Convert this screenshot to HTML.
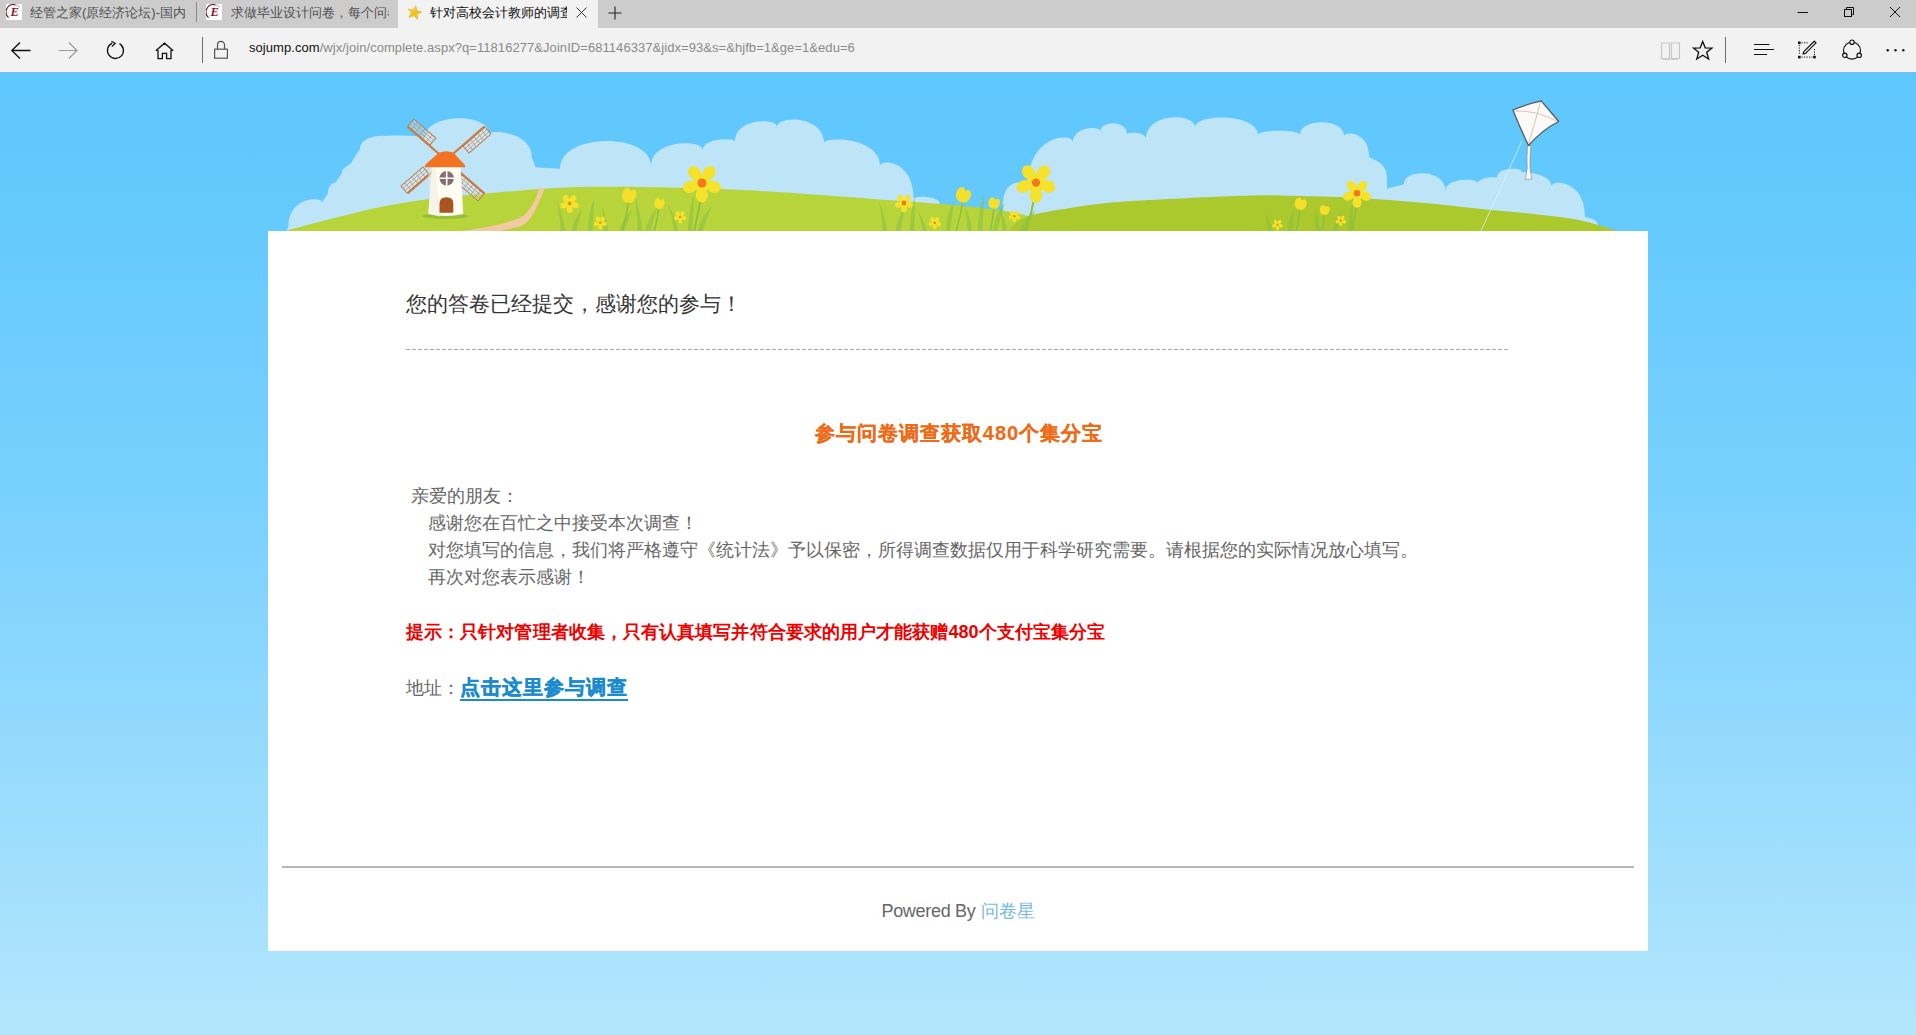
<!DOCTYPE html>
<html><head><meta charset="utf-8">
<style>
*{margin:0;padding:0;box-sizing:border-box}
html,body{width:1916px;height:1035px;overflow:hidden;font-family:"Liberation Sans",sans-serif}
body{position:relative;background:#fff}
.abs{position:absolute}
#tabs{position:absolute;left:0;top:0;width:1916px;height:28px;background:#cccccc}
#addr{position:absolute;left:0;top:28px;width:1916px;height:44px;background:#f2f2f2}
#page{position:absolute;left:0;top:72px;width:1916px;height:963px;background:linear-gradient(to bottom,#5ec7fd 0%,#63c9fd 12%,#77d0fd 42%,#95dafd 71%,#b3e6fc 100%)}
.tabt{position:absolute;top:5px;font-size:13px;line-height:16px;white-space:nowrap;overflow:hidden;color:#505050}
.sep{position:absolute;width:1px;background:#7a7a7a}
</style></head>
<body>
<div id="tabs">
  <!-- tab1 -->
  <svg class="abs" style="left:6px;top:4px" width="16" height="16" viewBox="0 0 16 16">
    <rect x="0" y="0" width="16" height="16" fill="#fdfdfd"/>
    <path d="M9.5 0.9 A7.4 7.4 0 0 0 2.6 13.6" fill="none" stroke="#6a1a2c" stroke-width="1.2"/>
    <path d="M9.5 0.9 A7.4 7.4 0 0 1 14 3.2" fill="none" stroke="#b88090" stroke-width="0.8"/>
    <text x="4.6" y="12.4" font-family="Liberation Serif" font-style="italic" font-weight="bold" font-size="12.5" fill="#8a1628">E</text>
  </svg>
  <div class="tabt" style="left:30px;width:157px">经管之家(原经济论坛)-国内</div>
  <div class="sep" style="left:196px;top:2px;height:20px;background:#8a8a8a"></div>
  <!-- tab2 -->
  <svg class="abs" style="left:206px;top:4px" width="16" height="16" viewBox="0 0 16 16">
    <rect x="0" y="0" width="16" height="16" fill="#fdfdfd"/>
    <path d="M9.5 0.9 A7.4 7.4 0 0 0 2.6 13.6" fill="none" stroke="#6a1a2c" stroke-width="1.2"/>
    <path d="M9.5 0.9 A7.4 7.4 0 0 1 14 3.2" fill="none" stroke="#b88090" stroke-width="0.8"/>
    <text x="4.6" y="12.4" font-family="Liberation Serif" font-style="italic" font-weight="bold" font-size="12.5" fill="#8a1628">E</text>
  </svg>
  <div class="tabt" style="left:231px;width:158px">求做毕业设计问卷，每个问卷</div>
  <!-- active tab -->
  <div class="abs" style="left:398px;top:0;width:200px;height:28px;background:#f2f2f2"></div>
  <svg class="abs" style="left:406px;top:4px" width="17" height="17" viewBox="0 0 17 17">
    <defs><linearGradient id="sg" x1="0" y1="0" x2="1" y2="1"><stop offset="0" stop-color="#fde9a0"/><stop offset="0.5" stop-color="#f6bf1c"/><stop offset="1" stop-color="#f2d21a"/></linearGradient></defs>
    <path transform="rotate(12 8.5 8.5)" d="M8.5 1.6 L10.4 6.2 L15.4 6.5 L11.5 9.6 L12.9 14.6 L8.5 11.8 L4.1 14.6 L5.5 9.6 L1.6 6.5 L6.6 6.2 Z" fill="url(#sg)" stroke="#e3a514" stroke-width="0.5"/>
  </svg>
  <div class="tabt" style="left:430px;width:137px;color:#111">针对高校会计教师的调查</div>
  <svg class="abs" style="left:576px;top:7px" width="11" height="11" viewBox="0 0 11 11">
    <path d="M0.5 0.5 L10.5 10.5 M10.5 0.5 L0.5 10.5" stroke="#333" stroke-width="1"/>
  </svg>
  <svg class="abs" style="left:608px;top:6px" width="14" height="14" viewBox="0 0 14 14">
    <path d="M7 0.5 V13.5 M0.5 7 H13.5" stroke="#222" stroke-width="1.1"/>
  </svg>
  <!-- window controls -->
  <svg class="abs" style="left:1797px;top:11px" width="12" height="3" viewBox="0 0 12 3"><path d="M0.5 1.5 H11" stroke="#111" stroke-width="1"/></svg>
  <svg class="abs" style="left:1843px;top:6px" width="12" height="12" viewBox="0 0 12 12">
    <rect x="1.5" y="3.5" width="7" height="7" fill="none" stroke="#111" stroke-width="1"/>
    <path d="M3.5 3.5 V1.5 H10.5 V8.5 H8.5" fill="none" stroke="#111" stroke-width="1"/>
  </svg>
  <svg class="abs" style="left:1889px;top:6px" width="12" height="12" viewBox="0 0 12 12"><path d="M1 1 L11 11 M11 1 L1 11" stroke="#111" stroke-width="1"/></svg>
</div>
<div id="addr">
  <!-- back -->
  <svg class="abs" style="left:10px;top:13px" width="22" height="20" viewBox="0 0 22 20">
    <path d="M1.8 9.5 H20.5 M10 1.5 L1.8 9.5 L10 17.5" fill="none" stroke="#111" stroke-width="1.3"/>
  </svg>
  <!-- forward -->
  <svg class="abs" style="left:57px;top:13px" width="22" height="20" viewBox="0 0 22 20">
    <path d="M1.5 9.5 H20 M11.8 1.5 L20 9.5 L11.8 17.5" fill="none" stroke="#9a9a9a" stroke-width="1.2"/>
  </svg>
  <!-- refresh -->
  <svg class="abs" style="left:105px;top:12px" width="22" height="22" viewBox="0 0 22 22">
    <path d="M7.2 3.2 A8 8 0 1 0 14.5 3.6" fill="none" stroke="#111" stroke-width="1.3"/>
    <path d="M6.4 1.2 L10.2 3.3 L6.8 6.6" fill="none" stroke="#111" stroke-width="1.3"/>
  </svg>
  <!-- home -->
  <svg class="abs" style="left:153px;top:13px" width="22" height="20" viewBox="0 0 22 20">
    <path d="M2.8 9.8 L11.5 2.2 L20.2 9.8 M5 7.8 V17.6 H9.4 V12.4 H13.6 V17.6 H18 V7.8" fill="none" stroke="#111" stroke-width="1.3"/>
  </svg>
  <div class="sep" style="left:202px;top:9px;height:26px;background:#6a6a6a"></div>
  <!-- lock -->
  <svg class="abs" style="left:212px;top:12px" width="18" height="20" viewBox="0 0 18 20">
    <path d="M5.5 9 V4.8 A3.5 3.5 0 0 1 12.5 4.8 V9" fill="none" stroke="#555" stroke-width="1.2"/>
    <rect x="2.6" y="9.2" width="12.8" height="9" fill="none" stroke="#555" stroke-width="1.2"/>
  </svg>
  <div class="abs" id="url" style="left:249px;top:12px;letter-spacing:0.06px;font-size:13px;line-height:16px;white-space:nowrap;color:#8a8a8a"><span style="color:#111">sojump.com</span>/wjx/join/complete.aspx?q=11816277&amp;JoinID=681146337&amp;jidx=93&amp;s=&amp;hjfb=1&amp;ge=1&amp;edu=6</div>
  <!-- reading view -->
  <svg class="abs" style="left:1660px;top:13px" width="22" height="20" viewBox="0 0 22 20">
    <path d="M1.5 2 H9.5 V17.5 H1.5 Z M11.5 2 H19.5 V17.5 H11.5 Z" fill="none" stroke="#c6c6c6" stroke-width="1.2"/>
    <path d="M3 18.5 H18" stroke="#d0d0d0" stroke-width="1"/>
  </svg>
  <!-- star -->
  <svg class="abs" style="left:1692px;top:12px" width="22" height="21" viewBox="0 0 22 21">
    <path d="M10.7 1.5 L13.2 7.8 L20 8.1 L14.7 12.3 L16.6 19 L10.7 15.2 L4.8 19 L6.7 12.3 L1.4 8.1 L8.2 7.8 Z" fill="none" stroke="#111" stroke-width="1.3" stroke-linejoin="miter"/>
  </svg>
  <div class="sep" style="left:1725px;top:9px;height:26px;background:#6a6a6a"></div>
  <!-- hub -->
  <svg class="abs" style="left:1753px;top:15px" width="22" height="13" viewBox="0 0 22 13">
    <path d="M1 1.5 H16.5 M1 6.5 H21 M1 11.5 H14" stroke="#111" stroke-width="1.1"/>
  </svg>
  <!-- web note -->
  <svg class="abs" style="left:1797px;top:12px" width="22" height="20" viewBox="0 0 22 20">
    <rect x="1" y="1.5" width="2.6" height="2.6" fill="#111"/>
    <rect x="16.2" y="15.8" width="2.6" height="2.6" fill="#111"/>
    <rect x="1" y="15.8" width="2.6" height="2.6" fill="#111"/>
    <path d="M4.5 2.8 H11 M2.3 5 V15 M4.5 17.1 H15.5 M17.5 9 V15" stroke="#111" stroke-width="1" stroke-dasharray="1.2 1.3"/>
    <path d="M6 14 L8.5 13.4 L19 2.8 L17.3 1.2 L6.8 11.6 Z" fill="none" stroke="#111" stroke-width="1.2" stroke-linejoin="round"/>
  </svg>
  <!-- share -->
  <svg class="abs" style="left:1841px;top:12px;overflow:visible" width="22" height="22" viewBox="0 0 22 22">
    <circle cx="11" cy="10.6" r="8.5" fill="none" stroke="#111" stroke-width="1.2"/>
    <circle cx="11" cy="2.2" r="2.2" fill="#f2f2f2" stroke="#111" stroke-width="1.2"/>
    <circle cx="3.8" cy="15.3" r="2.2" fill="#f2f2f2" stroke="#111" stroke-width="1.2"/>
    <circle cx="18.2" cy="15.3" r="2.2" fill="#f2f2f2" stroke="#111" stroke-width="1.2"/>
  </svg>
  <!-- more -->
  <svg class="abs" style="left:1886px;top:20px" width="20" height="5" viewBox="0 0 20 5">
    <circle cx="1.7" cy="2.2" r="1.2" fill="#111"/><circle cx="9.5" cy="2.2" r="1.2" fill="#111"/><circle cx="17.3" cy="2.2" r="1.2" fill="#111"/>
  </svg>
</div>
<div id="page">
  <div class="abs" style="left:0;top:0;width:1916px;height:1px;background:#7fbcdc"></div>
</div>
<svg class="abs" style="left:0;top:72px" width="1916" height="160" viewBox="0 72 1916 160"><path d="M286,232 L288.5,226 C288.5,196.4 322.0,196.4 322.0,202.3 L328,193.5 C328.0,182.8 336.0,182.8 336.0,182.0 L342,173 C342.0,165.7 352.0,165.7 352.0,161.0 L360,149 C360.0,135.2 385.0,135.2 385.0,136.0 C385.0,135.0 425.0,135.0 425.0,138.0 C425.0,112.5 489.0,112.5 489.0,133.6 C489.0,130.1 532.0,130.1 532.0,158.0 L535.7,167.2 L560,168.7 C560.0,132.2 651.0,132.2 651.0,166.0 C651.0,139.3 703.0,139.3 703.0,150.0 C703.0,137.7 735.0,137.7 735.0,141.5 C735.0,117.9 777.0,117.9 777.0,127.0 C777.0,115.0 824.0,115.0 824.0,143.0 C824.0,136.5 880.0,136.5 880.0,166.0 C880.0,159.2 913.6,159.2 913.6,199.0 C913.6,195.5 940.0,195.5 940.0,204.0 L940,232 Z" fill="#bee4f8"/><path d="M1002.8,232 L1002.8,205 C1002.8,178.2 1027.0,178.2 1027.0,190.0 C1027.0,132.6 1073.0,132.6 1073.0,142.4 C1073.0,125.7 1100.7,125.7 1100.7,131.4 C1100.7,120.2 1127.0,120.2 1127.0,134.3 C1127.0,131.7 1146.0,131.7 1146.0,138.7 C1146.0,112.3 1195.0,112.3 1195.0,127.3 C1195.0,113.0 1258.0,113.0 1258.0,135.0 C1258.0,129.3 1300.0,129.3 1300.0,135.0 C1300.0,118.0 1344.0,118.0 1344.0,136.0 C1344.0,131.3 1369.0,131.3 1369.0,156.0 C1369.0,159.8 1387.0,159.8 1387.0,178.0 L1387,190 C1387.0,186.3 1404.0,186.3 1404.0,183.5 C1404.0,168.7 1445.5,168.7 1445.5,190.8 C1445.5,177.6 1478.0,177.6 1478.0,183.5 C1478.0,176.7 1497.0,176.7 1497.0,177.7 C1497.0,167.0 1522.0,167.0 1522.0,172.0 C1522.0,172.3 1551.4,172.3 1551.4,186.4 C1551.4,179.4 1585.0,179.4 1585.0,217.0 C1585.0,217.6 1598.0,217.6 1598.0,226.0 L1618,232 Z" fill="#bee4f8"/><path d="M286,232 C286.5,231.7 280.1,232.5 288.8,230.0 C297.6,227.5 323.0,220.9 338.5,217.0 C354.0,213.1 367.4,209.6 382.0,206.7 C396.6,203.8 408.9,201.6 426.0,199.4 C443.1,197.2 462.3,195.4 484.6,193.5 C506.9,191.6 537.4,188.8 560.0,187.7 C582.6,186.6 593.3,186.6 620.0,186.8 C646.7,187.0 690.0,187.9 720.0,189.0 C750.0,190.1 773.3,191.8 800.0,193.5 C826.7,195.2 856.9,197.7 880.0,199.4 C903.1,201.1 921.5,202.4 938.5,203.8 C955.5,205.2 967.4,206.1 982.0,208.0 C996.6,209.9 1012.7,211.4 1026.0,215.4 C1039.3,219.4 1056.0,229.2 1062.0,232.0 Z" fill="#b7d43a"/><path d="M1008,232 C1011.0,229.5 1015.7,221.0 1026.0,217.0 C1036.3,213.0 1055.4,210.4 1070.0,208.0 C1084.6,205.6 1098.8,203.7 1113.8,202.3 C1128.8,200.9 1137.3,200.5 1160.0,199.4 C1182.7,198.3 1226.7,196.1 1250.0,195.5 C1273.3,194.9 1281.7,195.6 1300.0,196.0 C1318.3,196.4 1340.2,196.9 1360.0,198.0 C1379.8,199.1 1399.0,200.8 1418.5,202.5 C1438.0,204.2 1457.6,206.5 1477.0,208.4 C1496.4,210.3 1518.0,212.3 1535.0,214.2 C1552.0,216.1 1565.5,217.3 1579.0,220.0 C1592.5,222.7 1608.5,228.3 1615.7,230.3 C1622.9,232.3 1621.0,231.7 1622.0,232.0 Z" fill="#abc82d"/><path d="M539,188 C538.2,190.3 537.0,197.2 534.0,202.0 C531.0,206.8 528.0,213.0 521.0,217.0 C514.0,221.0 501.8,223.7 492.0,226.0 C482.2,228.3 469.3,229.8 462.0,231.0 C454.7,232.2 450.3,232.7 448.0,233.0 L492,233 492,233 C493.2,232.7 494.2,232.2 499.0,231.0 C503.8,229.8 515.7,228.3 521.0,226.0 C526.3,223.7 528.0,221.0 531.0,217.0 C534.0,213.0 536.7,206.8 539.0,202.0 C541.3,197.2 544.0,190.3 545.0,188.0 Z" fill="#f3c9a2"/><path d="M560.8,232 Q559.9,215.5 557.0,202.0 Q563.5,217.0 565.2,232 Z" fill="#86c043" fill-opacity="0.55"/><path d="M571.8,232 Q573.0,219.9 582.0,210.0 Q578.6,221.0 576.2,232 Z" fill="#86c043" fill-opacity="0.55"/><path d="M587.8,232 Q588.4,213.3 594.0,198.0 Q593.5,215.0 592.2,232 Z" fill="#86c043" fill-opacity="0.55"/><path d="M603.8,232 Q603.1,217.7 602.0,206.0 Q607.0,219.0 608.2,232 Z" fill="#86c043" fill-opacity="0.55"/><path d="M619.8,232 Q621.2,219.9 632.0,210.0 Q627.2,221.0 624.2,232 Z" fill="#86c043" fill-opacity="0.55"/><path d="M637.8,232 Q637.0,212.2 635.0,196.0 Q640.8,214.0 642.2,232 Z" fill="#86c043" fill-opacity="0.55"/><path d="M645.8,232 Q647.1,218.8 657.0,208.0 Q653.0,220.0 650.2,232 Z" fill="#86c043" fill-opacity="0.55"/><path d="M673.8,232 Q672.5,216.6 668.0,204.0 Q675.9,218.0 678.2,232 Z" fill="#86c043" fill-opacity="0.55"/><path d="M687.8,232 Q688.4,211.1 694.0,194.0 Q693.5,213.0 692.2,232 Z" fill="#86c043" fill-opacity="0.55"/><path d="M697.8,232 Q699.5,217.7 712.0,206.0 Q705.9,219.0 702.2,232 Z" fill="#86c043" fill-opacity="0.55"/><path d="M882.8,232 Q881.9,215.5 879.0,202.0 Q885.5,217.0 887.2,232 Z" fill="#86c043" fill-opacity="0.55"/><path d="M895.8,232 Q896.8,218.8 905.0,208.0 Q902.4,220.0 900.2,232 Z" fill="#86c043" fill-opacity="0.55"/><path d="M909.8,232 Q910.2,212.2 915.0,196.0 Q915.1,214.0 914.2,232 Z" fill="#86c043" fill-opacity="0.55"/><path d="M922.8,232 Q921.5,219.9 917.0,210.0 Q924.9,221.0 927.2,232 Z" fill="#86c043" fill-opacity="0.55"/><path d="M945.8,232 Q946.6,214.4 954.0,200.0 Q952.0,216.0 950.2,232 Z" fill="#86c043" fill-opacity="0.55"/><path d="M967.8,232 Q967.0,217.7 965.0,206.0 Q970.8,219.0 972.2,232 Z" fill="#86c043" fill-opacity="0.55"/><path d="M977.8,232 Q978.4,210.0 984.0,192.0 Q983.5,212.0 982.2,232 Z" fill="#86c043" fill-opacity="0.55"/><path d="M992.8,232 Q994.2,215.5 1005.0,202.0 Q1000.2,217.0 997.2,232 Z" fill="#86c043" fill-opacity="0.55"/><path d="M1002.8,232 Q1001.9,217.7 999.0,206.0 Q1005.5,219.0 1007.2,232 Z" fill="#86c043" fill-opacity="0.55"/><path d="M1019.8,232 Q1021.9,219.9 1036.0,210.0 Q1028.5,221.0 1024.2,232 Z" fill="#86c043" fill-opacity="0.55"/><path d="M1267.8,232 Q1267.0,221.0 1265.0,212.0 Q1270.8,222.0 1272.2,232 Z" fill="#86c043" fill-opacity="0.55"/><path d="M1287.8,232 Q1288.3,218.8 1294.0,208.0 Q1293.5,220.0 1292.2,232 Z" fill="#86c043" fill-opacity="0.55"/><path d="M1315.8,232 Q1315.3,217.7 1315.0,206.0 Q1319.3,219.0 1320.2,232 Z" fill="#86c043" fill-opacity="0.55"/><path d="M1332.8,232 Q1333.7,219.9 1341.0,210.0 Q1339.0,221.0 1337.2,232 Z" fill="#86c043" fill-opacity="0.55"/><path d="M1347.8,232 Q1348.2,215.5 1353.0,202.0 Q1353.2,217.0 1352.2,232 Z" fill="#86c043" fill-opacity="0.55"/><path d="M702,190 Q699.0,211.0 694,232" stroke="#8cc33c" stroke-width="2" fill="none"/><path d="M1036,190 Q1032.0,211.0 1026,232" stroke="#8cc33c" stroke-width="2" fill="none"/><path d="M1357,199 Q1355.5,215.5 1352,232" stroke="#8cc33c" stroke-width="1.8" fill="none"/><path d="M629,200 Q626.5,216.0 622,232" stroke="#8cc33c" stroke-width="1.6" fill="none"/><path d="M659,207 Q657.5,219.5 654,232" stroke="#8cc33c" stroke-width="1.6" fill="none"/><path d="M963,200 Q960.5,216.0 956,232" stroke="#8cc33c" stroke-width="1.6" fill="none"/><path d="M994,207 Q993.0,219.5 990,232" stroke="#8cc33c" stroke-width="1.6" fill="none"/><path d="M1300,208 Q1299.0,220.0 1296,232" stroke="#8cc33c" stroke-width="1.6" fill="none"/><path d="M1324,213 Q1324.0,222.5 1322,232" stroke="#8cc33c" stroke-width="1.6" fill="none"/><g transform="translate(446,160) rotate(-139)"><line x1="0" y1="0" x2="51" y2="0" stroke="#d07a3a" stroke-width="2.2"/><rect x="22" y="0.8" width="29" height="9" fill="#f2f2ee" fill-opacity="0.35" stroke="#b77d55" stroke-width="1"/><line x1="26.8" y1="0.8" x2="26.8" y2="9.8" stroke="#b98a66" stroke-width="0.7"/><line x1="31.7" y1="0.8" x2="31.7" y2="9.8" stroke="#b98a66" stroke-width="0.7"/><line x1="36.5" y1="0.8" x2="36.5" y2="9.8" stroke="#b98a66" stroke-width="0.7"/><line x1="41.3" y1="0.8" x2="41.3" y2="9.8" stroke="#b98a66" stroke-width="0.7"/><line x1="46.2" y1="0.8" x2="46.2" y2="9.8" stroke="#b98a66" stroke-width="0.7"/><line x1="22" y1="3.8" x2="51" y2="3.8" stroke="#b98a66" stroke-width="0.7"/><line x1="22" y1="6.8" x2="51" y2="6.8" stroke="#b98a66" stroke-width="0.7"/></g><g transform="translate(446,160) rotate(-41)"><line x1="0" y1="0" x2="51" y2="0" stroke="#d07a3a" stroke-width="2.2"/><rect x="22" y="0.8" width="29" height="9" fill="#f2f2ee" fill-opacity="0.35" stroke="#b77d55" stroke-width="1"/><line x1="26.8" y1="0.8" x2="26.8" y2="9.8" stroke="#b98a66" stroke-width="0.7"/><line x1="31.7" y1="0.8" x2="31.7" y2="9.8" stroke="#b98a66" stroke-width="0.7"/><line x1="36.5" y1="0.8" x2="36.5" y2="9.8" stroke="#b98a66" stroke-width="0.7"/><line x1="41.3" y1="0.8" x2="41.3" y2="9.8" stroke="#b98a66" stroke-width="0.7"/><line x1="46.2" y1="0.8" x2="46.2" y2="9.8" stroke="#b98a66" stroke-width="0.7"/><line x1="22" y1="3.8" x2="51" y2="3.8" stroke="#b98a66" stroke-width="0.7"/><line x1="22" y1="6.8" x2="51" y2="6.8" stroke="#b98a66" stroke-width="0.7"/></g><g transform="translate(446,160) rotate(41)"><line x1="0" y1="0" x2="51" y2="0" stroke="#d07a3a" stroke-width="2.2"/><rect x="22" y="0.8" width="29" height="9" fill="#f2f2ee" fill-opacity="0.35" stroke="#b77d55" stroke-width="1"/><line x1="26.8" y1="0.8" x2="26.8" y2="9.8" stroke="#b98a66" stroke-width="0.7"/><line x1="31.7" y1="0.8" x2="31.7" y2="9.8" stroke="#b98a66" stroke-width="0.7"/><line x1="36.5" y1="0.8" x2="36.5" y2="9.8" stroke="#b98a66" stroke-width="0.7"/><line x1="41.3" y1="0.8" x2="41.3" y2="9.8" stroke="#b98a66" stroke-width="0.7"/><line x1="46.2" y1="0.8" x2="46.2" y2="9.8" stroke="#b98a66" stroke-width="0.7"/><line x1="22" y1="3.8" x2="51" y2="3.8" stroke="#b98a66" stroke-width="0.7"/><line x1="22" y1="6.8" x2="51" y2="6.8" stroke="#b98a66" stroke-width="0.7"/></g><g transform="translate(446,160) rotate(139)"><line x1="0" y1="0" x2="51" y2="0" stroke="#d07a3a" stroke-width="2.2"/><rect x="22" y="0.8" width="29" height="9" fill="#f2f2ee" fill-opacity="0.35" stroke="#b77d55" stroke-width="1"/><line x1="26.8" y1="0.8" x2="26.8" y2="9.8" stroke="#b98a66" stroke-width="0.7"/><line x1="31.7" y1="0.8" x2="31.7" y2="9.8" stroke="#b98a66" stroke-width="0.7"/><line x1="36.5" y1="0.8" x2="36.5" y2="9.8" stroke="#b98a66" stroke-width="0.7"/><line x1="41.3" y1="0.8" x2="41.3" y2="9.8" stroke="#b98a66" stroke-width="0.7"/><line x1="46.2" y1="0.8" x2="46.2" y2="9.8" stroke="#b98a66" stroke-width="0.7"/><line x1="22" y1="3.8" x2="51" y2="3.8" stroke="#b98a66" stroke-width="0.7"/><line x1="22" y1="6.8" x2="51" y2="6.8" stroke="#b98a66" stroke-width="0.7"/></g><ellipse cx="445.5" cy="216" rx="23" ry="3" fill="#8fb83a" opacity="0.8"/><path d="M432 166.5 L460.5 166.5 L463.3 214 Q446 218 428.3 214 Z" fill="#fffdf4"/><path d="M428.5 172 L430.5 214 Q437 216.5 440 216.5 L436 166.5 L432 166.5 Z" fill="#f1ece0" opacity="0.6"/><path d="M424.5 167.2 L465.5 167.2 Q465.5 165 463 163 L453.5 152.8 Q446 149.8 438.8 152.8 L427 163 Q424.5 165 424.5 167.2 Z" fill="#f27321"/><circle cx="446.7" cy="178.3" r="7.2" fill="#8a6b6e"/><path d="M446.7 171 V185.6 M439.4 178.3 H454" stroke="#fff" stroke-width="1.6"/><path d="M439.5 212.8 V203.5 Q439.5 197.2 446.5 197.2 Q453.3 197.2 453.3 203.5 V212.8 Z" fill="#a8561f"/><g fill="#f4e22c"><ellipse cx="566.0" cy="198.5" rx="3.5" ry="3.0" transform="rotate(-126 566.0 198.5)"/><ellipse cx="573.2" cy="198.5" rx="3.5" ry="3.0" transform="rotate(-54 573.2 198.5)"/><ellipse cx="575.4" cy="205.4" rx="3.5" ry="3.0" transform="rotate(18 575.4 205.4)"/><ellipse cx="569.6" cy="209.6" rx="3.5" ry="3.0" transform="rotate(90 569.6 209.6)"/><ellipse cx="563.8" cy="205.4" rx="3.5" ry="3.0" transform="rotate(162 563.8 205.4)"/><circle cx="569.6" cy="203.5" r="4.5"/></g><circle cx="569.6" cy="203.5" r="2.0" fill="#e09a12"/><g fill="#f4e22c"><ellipse cx="597.8" cy="219.1" rx="2.5" ry="2.1" transform="rotate(-126 597.8 219.1)"/><ellipse cx="602.8" cy="219.1" rx="2.5" ry="2.1" transform="rotate(-54 602.8 219.1)"/><ellipse cx="604.4" cy="223.9" rx="2.5" ry="2.1" transform="rotate(18 604.4 223.9)"/><ellipse cx="600.3" cy="226.9" rx="2.5" ry="2.1" transform="rotate(90 600.3 226.9)"/><ellipse cx="596.2" cy="223.9" rx="2.5" ry="2.1" transform="rotate(162 596.2 223.9)"/><circle cx="600.3" cy="222.6" r="3.1"/></g><circle cx="600.3" cy="222.6" r="1.4" fill="#e09a12"/><g transform="translate(629,195.5) rotate(20)"><path d="M-7.0,-1.5 Q-7.0,7.5 0,7.5 Q7.0,7.5 7.0,-1.5 Q6.3,-7.5 2.1,-6.8 L0,-4.5 L-2.1,-6.8 Q-6.3,-7.5 -7.0,-1.5 Z" fill="#f4df2a"/></g><g transform="translate(659.3,203.5) rotate(15)"><path d="M-5.2,-1.1 Q-5.2,5.5 0,5.5 Q5.2,5.5 5.2,-1.1 Q4.7,-5.5 1.6,-5.0 L0,-3.3 L-1.6,-5.0 Q-4.7,-5.5 -5.2,-1.1 Z" fill="#f4df2a"/></g><g fill="#f4e22c"><ellipse cx="677.7" cy="213.5" rx="2.4" ry="2.0" transform="rotate(-126 677.7 213.5)"/><ellipse cx="682.5" cy="213.5" rx="2.4" ry="2.0" transform="rotate(-54 682.5 213.5)"/><ellipse cx="684.0" cy="218.1" rx="2.4" ry="2.0" transform="rotate(18 684.0 218.1)"/><ellipse cx="680.1" cy="220.9" rx="2.4" ry="2.0" transform="rotate(90 680.1 220.9)"/><ellipse cx="676.2" cy="218.1" rx="2.4" ry="2.0" transform="rotate(162 676.2 218.1)"/><circle cx="680.1" cy="216.8" r="3.0"/></g><circle cx="680.1" cy="216.8" r="1.4" fill="#e09a12"/><g fill="#f4e22c"><ellipse cx="694.6" cy="172.9" rx="7.2" ry="6.0" transform="rotate(-126 694.6 172.9)"/><ellipse cx="709.2" cy="172.9" rx="7.2" ry="6.0" transform="rotate(-54 709.2 172.9)"/><ellipse cx="713.7" cy="186.8" rx="7.2" ry="6.0" transform="rotate(18 713.7 186.8)"/><ellipse cx="701.9" cy="195.4" rx="7.2" ry="6.0" transform="rotate(90 701.9 195.4)"/><ellipse cx="690.1" cy="186.8" rx="7.2" ry="6.0" transform="rotate(162 690.1 186.8)"/><circle cx="701.9" cy="183" r="9.0"/></g><circle cx="701.9" cy="183" r="4.5" fill="#f07a1c"/><g fill="#f4e22c"><ellipse cx="900.5" cy="198.2" rx="3.4" ry="2.9" transform="rotate(-126 900.5 198.2)"/><ellipse cx="907.5" cy="198.2" rx="3.4" ry="2.9" transform="rotate(-54 907.5 198.2)"/><ellipse cx="909.6" cy="204.8" rx="3.4" ry="2.9" transform="rotate(18 909.6 204.8)"/><ellipse cx="904.0" cy="208.9" rx="3.4" ry="2.9" transform="rotate(90 904.0 208.9)"/><ellipse cx="898.4" cy="204.8" rx="3.4" ry="2.9" transform="rotate(162 898.4 204.8)"/><circle cx="904" cy="203" r="4.3"/></g><circle cx="904" cy="203" r="2.4" fill="#f07a1c"/><g fill="#f4e22c"><ellipse cx="932.4" cy="219.5" rx="2.4" ry="2.0" transform="rotate(-126 932.4 219.5)"/><ellipse cx="937.2" cy="219.5" rx="2.4" ry="2.0" transform="rotate(-54 937.2 219.5)"/><ellipse cx="938.7" cy="224.1" rx="2.4" ry="2.0" transform="rotate(18 938.7 224.1)"/><ellipse cx="934.8" cy="226.9" rx="2.4" ry="2.0" transform="rotate(90 934.8 226.9)"/><ellipse cx="930.9" cy="224.1" rx="2.4" ry="2.0" transform="rotate(162 930.9 224.1)"/><circle cx="934.8" cy="222.8" r="3.0"/></g><circle cx="934.8" cy="222.8" r="1.4" fill="#e09a12"/><g transform="translate(963.3,195) rotate(25)"><path d="M-7.5,-1.5 Q-7.5,7.5 0,7.5 Q7.5,7.5 7.5,-1.5 Q6.8,-7.5 2.2,-6.8 L0,-4.5 L-2.2,-6.8 Q-6.8,-7.5 -7.5,-1.5 Z" fill="#f4df2a"/></g><g transform="translate(994,203) rotate(15)"><path d="M-5.8,-1.2 Q-5.8,5.8 0,5.8 Q5.8,5.8 5.8,-1.2 Q5.2,-5.8 1.7,-5.2 L0,-3.4 L-1.7,-5.2 Q-5.2,-5.8 -5.8,-1.2 Z" fill="#f4df2a"/></g><g fill="#f4e22c"><ellipse cx="1012.1" cy="213.1" rx="2.2" ry="1.9" transform="rotate(-126 1012.1 213.1)"/><ellipse cx="1016.7" cy="213.1" rx="2.2" ry="1.9" transform="rotate(-54 1016.7 213.1)"/><ellipse cx="1018.1" cy="217.4" rx="2.2" ry="1.9" transform="rotate(18 1018.1 217.4)"/><ellipse cx="1014.4" cy="220.1" rx="2.2" ry="1.9" transform="rotate(90 1014.4 220.1)"/><ellipse cx="1010.7" cy="217.4" rx="2.2" ry="1.9" transform="rotate(162 1010.7 217.4)"/><circle cx="1014.4" cy="216.2" r="2.8"/></g><circle cx="1014.4" cy="216.2" r="1.3" fill="#e09a12"/><g fill="#f4e22c"><ellipse cx="1028.5" cy="172.3" rx="7.4" ry="6.2" transform="rotate(-126 1028.5 172.3)"/><ellipse cx="1043.5" cy="172.3" rx="7.4" ry="6.2" transform="rotate(-54 1043.5 172.3)"/><ellipse cx="1048.1" cy="186.5" rx="7.4" ry="6.2" transform="rotate(18 1048.1 186.5)"/><ellipse cx="1036.0" cy="195.4" rx="7.4" ry="6.2" transform="rotate(90 1036.0 195.4)"/><ellipse cx="1023.9" cy="186.5" rx="7.4" ry="6.2" transform="rotate(162 1023.9 186.5)"/><circle cx="1036" cy="182.6" r="9.3"/></g><circle cx="1036" cy="182.6" r="4.2" fill="#f07a1c"/><g fill="#f4e22c"><ellipse cx="1275.6" cy="221.9" rx="2.0" ry="1.7" transform="rotate(-126 1275.6 221.9)"/><ellipse cx="1279.6" cy="221.9" rx="2.0" ry="1.7" transform="rotate(-54 1279.6 221.9)"/><ellipse cx="1280.9" cy="225.8" rx="2.0" ry="1.7" transform="rotate(18 1280.9 225.8)"/><ellipse cx="1277.6" cy="228.2" rx="2.0" ry="1.7" transform="rotate(90 1277.6 228.2)"/><ellipse cx="1274.3" cy="225.8" rx="2.0" ry="1.7" transform="rotate(162 1274.3 225.8)"/><circle cx="1277.6" cy="224.7" r="2.5"/></g><circle cx="1277.6" cy="224.7" r="1.2" fill="#e09a12"/><g transform="translate(1300.5,203.8) rotate(20)"><path d="M-6.0,-1.2 Q-6.0,6.0 0,6.0 Q6.0,6.0 6.0,-1.2 Q5.4,-6.0 1.8,-5.4 L0,-3.6 L-1.8,-5.4 Q-5.4,-6.0 -6.0,-1.2 Z" fill="#f4df2a"/></g><g transform="translate(1324.6,210) rotate(15)"><path d="M-5.0,-1.0 Q-5.0,5.0 0,5.0 Q5.0,5.0 5.0,-1.0 Q4.5,-5.0 1.5,-4.5 L0,-3.0 L-1.5,-4.5 Q-4.5,-5.0 -5.0,-1.0 Z" fill="#f4df2a"/></g><g fill="#f4e22c"><ellipse cx="1338.8" cy="217.7" rx="2.0" ry="1.7" transform="rotate(-126 1338.8 217.7)"/><ellipse cx="1342.8" cy="217.7" rx="2.0" ry="1.7" transform="rotate(-54 1342.8 217.7)"/><ellipse cx="1344.1" cy="221.6" rx="2.0" ry="1.7" transform="rotate(18 1344.1 221.6)"/><ellipse cx="1340.8" cy="224.0" rx="2.0" ry="1.7" transform="rotate(90 1340.8 224.0)"/><ellipse cx="1337.5" cy="221.6" rx="2.0" ry="1.7" transform="rotate(162 1337.5 221.6)"/><circle cx="1340.8" cy="220.5" r="2.5"/></g><circle cx="1340.8" cy="220.5" r="1.2" fill="#e09a12"/><g fill="#f4e22c"><ellipse cx="1351.6" cy="185.8" rx="5.3" ry="4.5" transform="rotate(-126 1351.6 185.8)"/><ellipse cx="1362.4" cy="185.8" rx="5.3" ry="4.5" transform="rotate(-54 1362.4 185.8)"/><ellipse cx="1365.8" cy="196.2" rx="5.3" ry="4.5" transform="rotate(18 1365.8 196.2)"/><ellipse cx="1357.0" cy="202.5" rx="5.3" ry="4.5" transform="rotate(90 1357.0 202.5)"/><ellipse cx="1348.2" cy="196.2" rx="5.3" ry="4.5" transform="rotate(162 1348.2 196.2)"/><circle cx="1357" cy="193.3" r="6.7"/></g><circle cx="1357" cy="193.3" r="3.3" fill="#f07a1c"/><line x1="1522" y1="141" x2="1481" y2="231" stroke="#e8f6fc" stroke-width="1.2" opacity="0.55"/><path d="M1527.5,145.5 Q1526.5,158 1527.2,168 Q1526,176 1525.5,179.5 L1532,179 Q1530.5,174 1530,168 Q1529.8,156 1530.8,145.5 Z" fill="#fbfaf8" stroke="#8a7a70" stroke-width="0.6"/><path d="M1541.2,100.8 L1558.7,121.5 Q1542,130 1528.5,145.5 Q1520,128 1512.9,110 Q1527,104 1541.2,100.8 Z" fill="#fbfaf8" stroke="#555" stroke-width="1.2" stroke-linejoin="round"/><path d="M1514,111 Q1536,110 1556.5,121 M1540.5,102 Q1535,122 1528.5,144" stroke="#dcc3ad" stroke-width="1" fill="none"/></svg>
<div id="box" class="abs" style="left:268px;top:231px;width:1380px;height:720px;background:#fff">
  <div class="abs" style="left:138px;top:58px;font-size:21px;line-height:30px;color:#333;white-space:nowrap">您的答卷已经提交，感谢您的参与！</div>
  <div class="abs" style="left:138px;top:118px;width:1104px;height:1px;background:repeating-linear-gradient(to right,#a8a8a8 0,#a8a8a8 4px,transparent 4px,transparent 6px)"></div>
  <div class="abs" style="left:0;top:187px;width:1380px;text-align:center;padding-left:2px;font-size:20px;letter-spacing:1px;line-height:30px;font-weight:bold;color:#ee6a14;white-space:nowrap;-webkit-text-stroke:0.15px #ee6a14">参与问卷调查获取480个集分宝</div>
  <div class="abs" style="left:143px;top:252px;font-size:18px;line-height:27px;color:#666;white-space:nowrap">亲爱的朋友：</div>
  <div class="abs" style="left:160px;top:279px;font-size:18px;line-height:27px;color:#666;white-space:nowrap">感谢您在百忙之中接受本次调查！<br>对您填写的信息，我们将严格遵守《统计法》予以保密，所得调查数据仅用于科学研究需要。请根据您的实际情况放心填写。<br>再次对您表示感谢！</div>
  <div class="abs" style="left:138px;top:388px;font-size:18px;line-height:27px;font-weight:bold;color:#ee0000;white-space:nowrap;letter-spacing:0.08px">提示：只针对管理者收集，只有认真填写并符合要求的用户才能获赠480个支付宝集分宝</div>
  <div class="abs" style="left:138px;top:443px;font-size:18px;line-height:27px;color:#666;white-space:nowrap">地址：<span style="font-size:20px;letter-spacing:1px;font-weight:bold;color:#1a8bd0;-webkit-text-stroke:0.4px #1a8bd0">点击这里参与调查</span></div>
  <div class="abs" style="left:192px;top:468px;width:168px;height:2px;background:#1a8bd0"></div>
  <div class="abs" style="left:14px;top:635px;width:1352px;height:2px;background:#b5b5b5"></div>
  <div class="abs" style="left:0;top:669px;width:1380px;text-align:center;font-size:18px;line-height:22px;color:#666;white-space:nowrap"><span style="letter-spacing:-0.3px">Powered By</span> <span style="color:#78b9e4;font-family:'Liberation Serif',serif">问卷星</span></div>
</div>
</body></html>
